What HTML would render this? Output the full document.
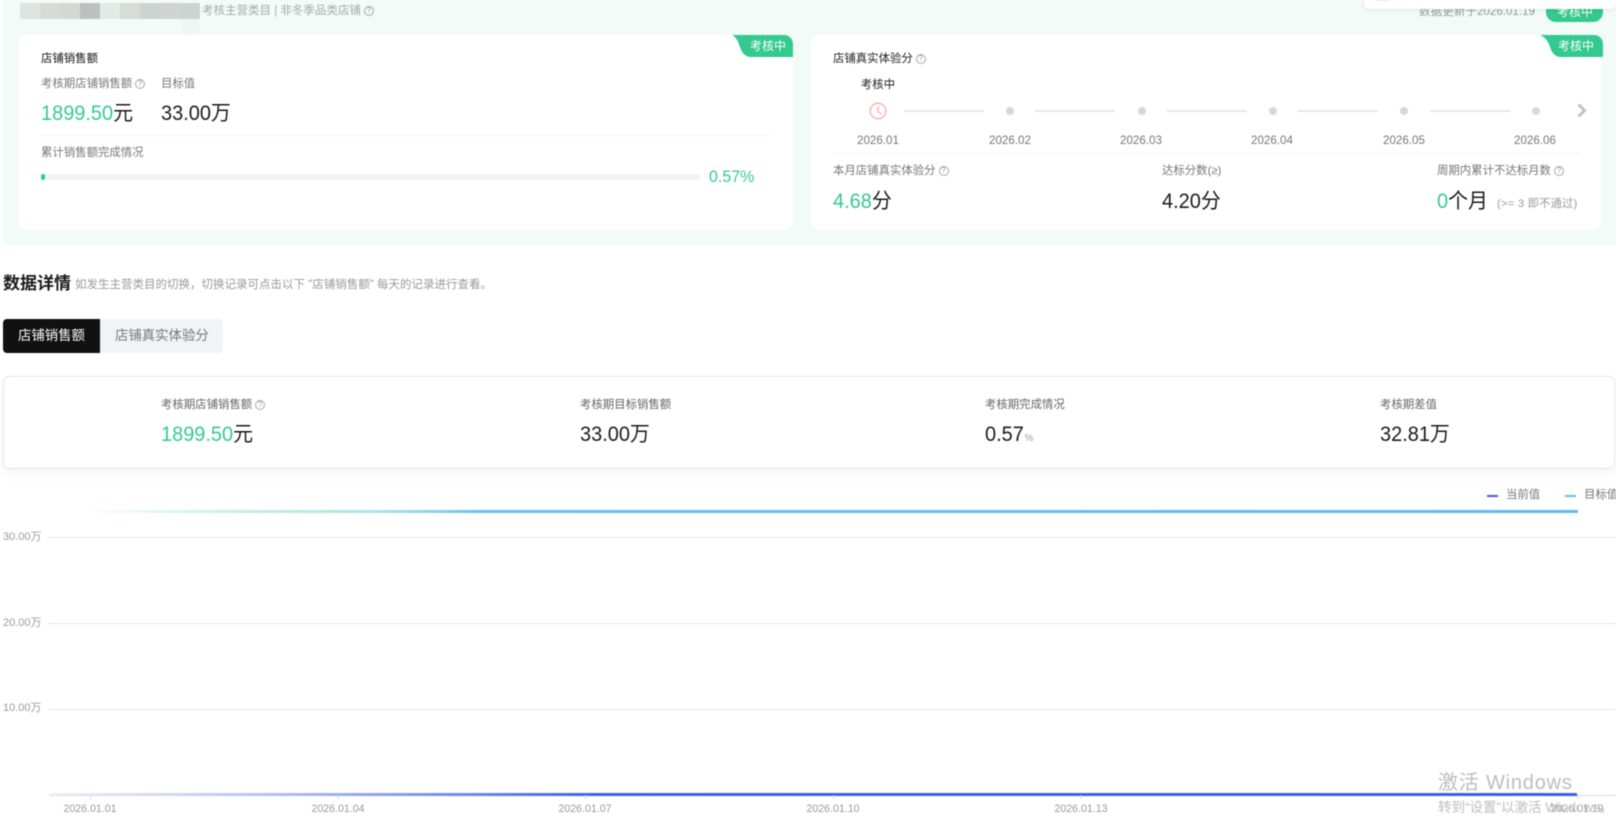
<!DOCTYPE html>
<html lang="zh">
<head>
<meta charset="utf-8">
<title>数据详情</title>
<style>
*{margin:0;padding:0;box-sizing:border-box}
html,body{width:1616px;height:822px;overflow:hidden;background:#fff}
body{font-family:"Liberation Sans","Noto Sans CJK SC",sans-serif;position:relative}
#w{position:absolute;left:0;top:0;width:1616px;height:822px;overflow:hidden;filter:blur(.45px)}
.a{position:absolute}
.t{position:absolute;white-space:nowrap;line-height:20px;height:20px}
.lab{font-size:11.4px;color:#777}
.val{font-size:21px;color:#1a1a1a;transform:scaleX(.95);transform-origin:left center}
.g{color:#36c995}
.q{display:inline-block;width:10px;height:10px;border:1px solid #aaa;border-radius:50%;font-size:8px;line-height:8px;text-align:center;color:#999;margin-left:3px;vertical-align:1px}
.card{position:absolute;background:#fff;border-radius:9px;top:35px;height:195px}
.div{position:absolute;height:1px;background:#f3f4f6}
.ln{position:absolute;height:2px;top:110px;background:#e7e7e9}
.dot{position:absolute;width:8px;height:8px;border-radius:50%;background:#d5d8e3;top:107px}
.dt{position:absolute;top:131px;line-height:20px;width:60px;text-align:center;font-size:11.6px;color:#777}
.grid{position:absolute;left:48px;right:0;height:1px;background:#e6e6ea}
.yl{position:absolute;left:3px;font-size:11px;color:#999;line-height:20px;white-space:nowrap}
.xl{position:absolute;top:799px;width:70px;text-align:center;font-size:10.6px;color:#999;line-height:20px}
.tick{position:absolute;top:795px;width:1px;height:4px;background:#d8d8dc}
.bt{position:absolute;color:#fff;font-size:12px;line-height:20px;white-space:nowrap}
</style>
</head>
<body>
<div id="w">
  <!-- mint banner -->
  <div class="a" style="left:3px;top:0;width:1613px;height:245px;background:#f2fbf8"></div>

  <!-- pixelated header -->
  <div class="a" style="left:20px;top:3px;width:20px;height:16px;background:#dfe3e1"></div>
  <div class="a" style="left:40px;top:3px;width:20px;height:16px;background:#d6dbd8"></div>
  <div class="a" style="left:60px;top:3px;width:20px;height:16px;background:#d4d8d5"></div>
  <div class="a" style="left:80px;top:3px;width:20px;height:16px;background:#bcc1c0"></div>
  <div class="a" style="left:100px;top:3px;width:20px;height:16px;background:#e2eae8"></div>
  <div class="a" style="left:120px;top:3px;width:20px;height:16px;background:#d8dcd9"></div>
  <div class="a" style="left:140px;top:3px;width:20px;height:16px;background:#cdd3d1"></div>
  <div class="a" style="left:160px;top:3px;width:20px;height:16px;background:#d0d5d3"></div>
  <div class="a" style="left:180px;top:3px;width:20px;height:16px;background:#cdd3d1"></div>
  <div class="a" style="left:182px;top:19px;width:17px;height:17px;background:#eef7f4;border-radius:0 0 8px 8px"></div>
  <div class="t" style="left:202px;top:1px;font-size:11.5px;color:#a5a9a8">考核主营类目 | 非冬季品类店铺<span class="q" style="border-color:#a5a9a8;color:#a5a9a8">?</span></div>

  <!-- top right -->
  <div class="t" style="left:1419px;top:2px;font-size:11.6px;color:#999">数据更新于2026.01.19</div>
  <div class="a" style="left:1546px;top:-10px;width:57px;height:32px;background:#33c98f;border-radius:10px"></div>
  <div class="bt" style="left:1557px;top:2px">考核中</div>
  <div class="a" style="left:1364px;top:-10px;width:252px;height:19px;background:#fff;border-radius:6px;box-shadow:0 1px 6px rgba(0,0,0,.08)"></div>
  <div class="a" style="left:1376px;top:0;width:14px;height:1px;background:#dfe6fb"></div>

  <!-- card 1 -->
  <div class="card" style="left:18px;width:775px"></div>
  <svg class="a" style="left:732px;top:35px" width="61" height="22" viewBox="0 0 61 22"><path d="M0 0H52a9 9 0 0 1 9 9V22H19C13 22 10 18 8 12C6 6 4 2 0 0Z" fill="#33c98f"/></svg>
  <div class="bt" style="left:750px;top:36px">考核中</div>
  <div class="t" style="left:41px;top:49px;font-size:11.4px;color:#111">店铺销售额</div>
  <div class="t lab" style="left:41px;top:74px">考核期店铺销售额<span class="q">?</span></div>
  <div class="t lab" style="left:161px;top:74px">目标值</div>
  <div class="t val" style="left:41px;top:104px"><span class="g">1899.50</span>元</div>
  <div class="t val" style="left:161px;top:104px">33.00万</div>
  <div class="div" style="left:41px;top:135px;width:729px"></div>
  <div class="t lab" style="left:41px;top:143px">累计销售额完成情况</div>
  <div class="a" style="left:41px;top:174px;width:659px;height:6px;border-radius:3px;background:#f2f2f7"></div>
  <div class="a" style="left:41px;top:174px;width:4px;height:6px;border-radius:3px;background:#2fc990"></div>
  <div class="t g" style="left:709px;top:167px;font-size:17px;transform:scaleX(.94);transform-origin:left center">0.57%</div>

  <!-- card 2 -->
  <div class="card" style="left:811px;width:791px"></div>
  <svg class="a" style="left:1540px;top:35px" width="63" height="22" viewBox="0 0 63 22"><path d="M0 0H54a9 9 0 0 1 9 9V22H21C15 22 12 18 10 12C8 6 5 2 0 0Z" fill="#33c98f"/></svg>
  <div class="bt" style="left:1558px;top:36px">考核中</div>
  <div class="t" style="left:833px;top:49px;font-size:11.4px;color:#222">店铺真实体验分<span class="q">?</span></div>
  <div class="t" style="left:860px;top:75px;width:36px;text-align:center;font-size:11.4px;color:#222">考核中</div>
  <svg class="a" style="left:868px;top:101px" width="20" height="20" viewBox="0 0 20 20"><circle cx="10" cy="10" r="7.8" fill="none" stroke="#fcb4b4" stroke-width="1.5"/><path d="M10 5V10.5L13.5 13" fill="none" stroke="#fcb4b4" stroke-width="1.4"/></svg>
  <div class="ln" style="left:904px;width:80px"></div>
  <div class="ln" style="left:1035px;width:80px"></div>
  <div class="ln" style="left:1167px;width:80px"></div>
  <div class="ln" style="left:1298px;width:80px"></div>
  <div class="ln" style="left:1430px;width:80px"></div>
  <div class="dot" style="left:1006px"></div>
  <div class="dot" style="left:1138px"></div>
  <div class="dot" style="left:1269px"></div>
  <div class="dot" style="left:1400px"></div>
  <div class="dot" style="left:1532px"></div>
  <svg class="a" style="left:1576px;top:103px" width="11" height="15" viewBox="0 0 11 15"><path d="M2.5 1.5L8.5 7.5L2.5 13.5" fill="none" stroke="#c4c2c2" stroke-width="3"/></svg>
  <div class="dt" style="left:848px">2026.01</div>
  <div class="dt" style="left:980px">2026.02</div>
  <div class="dt" style="left:1111px">2026.03</div>
  <div class="dt" style="left:1242px">2026.04</div>
  <div class="dt" style="left:1374px">2026.05</div>
  <div class="dt" style="left:1505px">2026.06</div>
  <div class="div" style="left:833px;top:153px;width:747px"></div>
  <div class="t lab" style="left:833px;top:161px">本月店铺真实体验分<span class="q">?</span></div>
  <div class="t lab" style="left:1162px;top:161px">达标分数(≥)</div>
  <div class="t lab" style="left:1437px;top:161px">周期内累计不达标月数<span class="q">?</span></div>
  <div class="t val" style="left:833px;top:192px"><span class="g">4.68</span>分</div>
  <div class="t val" style="left:1162px;top:192px">4.20分</div>
  <div class="t val" style="left:1437px;top:192px"><span class="g">0</span>个月</div>
  <div class="t" style="left:1497px;top:194px;font-size:11.2px;color:#999;letter-spacing:.25px">(&gt;= 3 即不通过)</div>

  <!-- data details -->
  <div class="t" style="left:3px;top:274px;font-size:17px;font-weight:bold;color:#1a1a1a">数据详情</div>
  <div class="t" style="left:75px;top:275px;font-size:11.5px;color:#999">如发生主营类目的切换，切换记录可点击以下 "店铺销售额" 每天的记录进行查看。</div>

  <div class="a" style="left:3px;top:319px;width:220px;height:34px;background:#f2f3f7;border-radius:4px"></div>
  <div class="a" style="left:3px;top:319px;width:97px;height:34px;background:#111;border-radius:4px 0 0 4px"></div>
  <div class="t" style="left:18px;top:326px;font-size:13.4px;color:#fff">店铺销售额</div>
  <div class="t" style="left:115px;top:326px;font-size:13.4px;color:#777">店铺真实体验分</div>

  <div class="a" style="left:3px;top:376px;width:1612px;height:93px;border:1px solid #e4e6ee;border-radius:6px;background:#fff;box-shadow:0 6px 12px rgba(40,50,90,.04)"></div>
  <div class="t lab" style="left:161px;top:395px;color:#666">考核期店铺销售额<span class="q">?</span></div>
  <div class="t lab" style="left:580px;top:395px;color:#666">考核期目标销售额</div>
  <div class="t lab" style="left:985px;top:395px;color:#666">考核期完成情况</div>
  <div class="t lab" style="left:1380px;top:395px;color:#666">考核期差值</div>
  <div class="t val" style="left:161px;top:425px"><span class="g">1899.50</span>元</div>
  <div class="t val" style="left:580px;top:425px">33.00万</div>
  <div class="t val" style="left:985px;top:425px">0.57<span style="font-size:10px;color:#999;margin-left:1px">%</span></div>
  <div class="t val" style="left:1380px;top:425px">32.81万</div>

  <!-- legend -->
  <div class="a" style="left:1487px;top:495px;width:11px;height:2px;background:#3b5bf5"></div>
  <div class="t lab" style="left:1506px;top:485px">当前值</div>
  <div class="a" style="left:1565px;top:495px;width:11px;height:2px;background:#54c0f5"></div>
  <div class="t lab" style="left:1584px;top:485px">目标值</div>

  <!-- chart -->
  <div class="a" style="left:85px;top:510px;width:1493px;height:3px;background:linear-gradient(90deg,rgba(191,240,228,0) 0,#c3f0e6 10%,#a6e4e6 20%,#63bff0 27%,#5dbdf0 100%)"></div>
  <div class="grid" style="top:537px"></div>
  <div class="grid" style="top:623px"></div>
  <div class="grid" style="top:709px"></div>
  <div class="yl" style="top:527px">30.00万</div>
  <div class="yl" style="top:613px">20.00万</div>
  <div class="yl" style="top:698px">10.00万</div>
  <div class="grid" style="top:795px;left:49px;background:#dcdce0"></div>
  <div class="a" style="left:49px;top:793px;width:1528px;height:3px;background:linear-gradient(90deg,rgba(221,224,234,.4) 0,#d9def0 6%,#b4c2f6 14%,#7f98f7 24%,#3d5ef5 36%,#3a5cf5 100%)"></div>
  <div class="tick" style="left:90px"></div>
  <div class="tick" style="left:338px"></div>
  <div class="tick" style="left:585px"></div>
  <div class="tick" style="left:833px"></div>
  <div class="tick" style="left:1080px"></div>
  <div class="tick" style="left:1577px"></div>
  <div class="xl" style="left:55px">2026.01.01</div>
  <div class="xl" style="left:303px">2026.01.04</div>
  <div class="xl" style="left:550px">2026.01.07</div>
  <div class="xl" style="left:798px">2026.01.10</div>
  <div class="xl" style="left:1046px">2026.01.13</div>
  <div class="xl" style="left:1542px">2026.01.19</div>

  <!-- activation watermark -->
  <div class="t" style="left:1438px;top:770px;height:26px;line-height:26px;font-size:20px;color:#bdbdbd;letter-spacing:.8px">激活 Windows</div>
  <div class="t" style="left:1438px;top:798px;font-size:13.5px;color:#bdbdbd">转到“设置”以激活 Windows。</div>
</div>
</body>
</html>
